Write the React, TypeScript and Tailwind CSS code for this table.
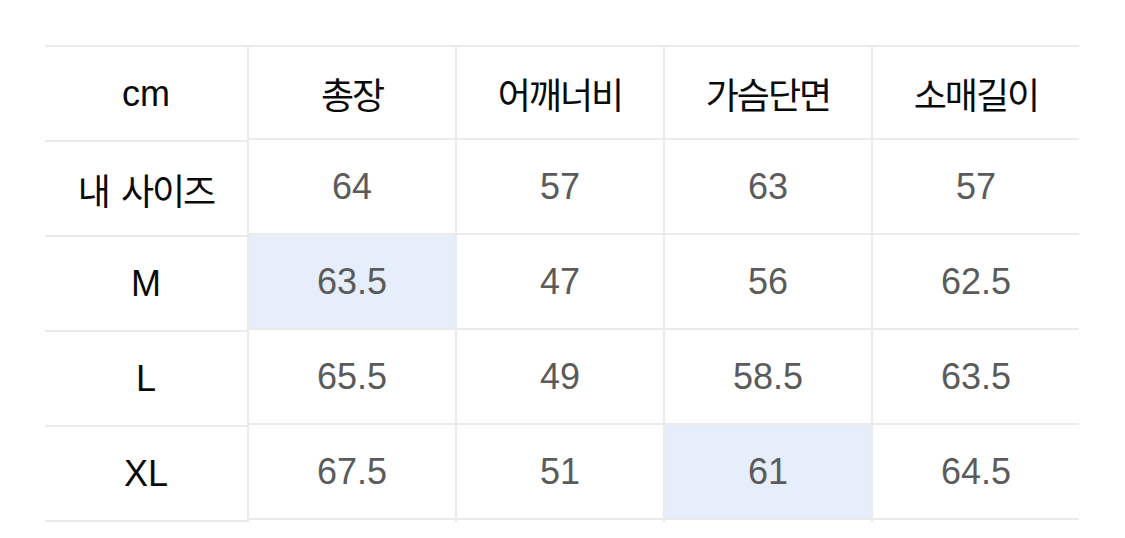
const HEADERS = ['총장', '어깨너비', '가슴단면', '소매길이'];

const ROWS = [
  { label: '내 사이즈', values: ['64', '57', '63', '57'] },
  { label: 'M', values: ['63.5', '47', '56', '62.5'] },
  { label: 'L', values: ['65.5', '49', '58.5', '63.5'] },
  { label: 'XL', values: ['67.5', '51', '61', '64.5'] },
];

// cells highlighted in blue: [row, col]
const HIGHLIGHT = ['1-0', '3-2'];

const latin = "font-['Liberation_Sans','Noto_Sans_CJK_KR',sans-serif] text-[36px]";
const korean = "font-['Noto_Sans_CJK_KR',sans-serif] text-[36px] font-normal tracking-[-2px]";

function isKorean(s: string) {
  return /[가-힣]/.test(s);
}

function Label({ text }: { text: string }) {
  if (!isKorean(text)) return <span className={`${latin} text-[#0a0a0a]`}>{text}</span>;
  const words = text.split(' ');
  return (
    <span className={`${korean} text-[#0a0a0a] flex items-center`}>
      {words.map((w, i) => (
        <span key={i} className={i > 0 ? 'ml-[12px]' : ''}>
          {w}
        </span>
      ))}
    </span>
  );
}

export default function App() {
  return (
    <div className="w-[1125px] h-[538px] bg-white overflow-hidden">
      <div className="flex pl-[45px] pt-[45px]">
        {/* label column */}
        <div className="flex flex-col w-[202px] border-t-2 border-[#ebebeb]">
          <div className="h-[95px] flex items-center justify-center border-b-2 border-[#ebebeb]">
            <Label text="cm" />
          </div>
          {ROWS.map((r) => (
            <div key={r.label} className="h-[95px] flex items-center justify-center border-b-2 border-[#ebebeb]">
              <Label text={r.label} />
            </div>
          ))}
        </div>

        {/* value columns */}
        {HEADERS.map((h, ci) => (
          <div key={h} className="flex flex-col w-[208px] border-t-2 border-l-2 border-[#ebebeb]">
            <div className="h-[93px] flex items-center justify-center border-b-2 border-[#ebebeb]">
              <Label text={h} />
            </div>
            {ROWS.map((r, ri) => (
              <div
                key={r.label}
                className={`h-[95px] flex items-center justify-center border-b-2 border-[#ebebeb] ${
                  HIGHLIGHT.includes(`${ri}-${ci}`) ? 'bg-[#e6edfb]' : ''
                }`}
              >
                <span className={`${latin} text-[#5b5b5b]`}>{r.values[ci]}</span>
              </div>
            ))}
          </div>
        ))}
      </div>
    </div>
  );
}
